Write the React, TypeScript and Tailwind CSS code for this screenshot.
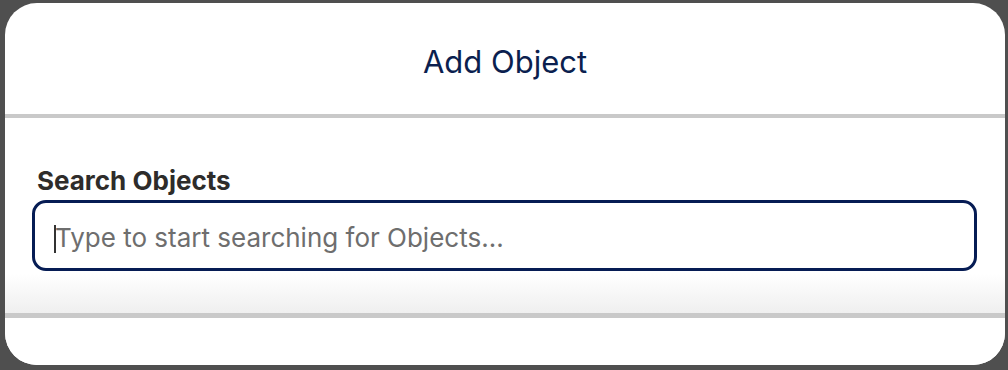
import React from 'react';

export default function App() {
  return (
    <div className="w-[1008px] h-[370px] bg-[#4f4f4f] pt-[3px] pl-[5px] pr-[3px] pb-[5px]">
      <div className="flex h-full flex-col overflow-hidden rounded-[32px] bg-white font-['Inter',sans-serif]">
        {/* header */}
        <div className="flex h-[111px] items-center justify-center pt-[8px]">
          <h2 className="text-[31px] font-normal text-[#0b1f4f]">Add Object</h2>
        </div>
        <div className="h-[4px] bg-[#c9c9c9]" />

        {/* body */}
        <div className="relative flex h-[195px] flex-col bg-gradient-to-b from-white from-[80%] to-[#efefef] px-[27px] pt-[49px]">
          <label className="mb-[5px] pl-[5px] text-[26px] font-bold leading-[28px] text-[#2e2c2a]">
            Search Objects
          </label>
          <div className="relative mr-[1px]">
            <input
              className="h-[71px] w-full rounded-[14px] border-[3px] border-[#061c54] bg-white pl-[20px] pt-[4px] text-[26px] text-[#333] outline-none placeholder:text-[#6e6e6e]"
              placeholder="Type to start searching for Objects..."
              readOnly
            />
            <span className="absolute left-[22px] top-[25px] h-[28px] w-[2px] bg-[#333]" />
          </div>
        </div>
        <div className="h-[5px] bg-[#c9c9c9]" />

        {/* footer */}
        <div className="flex-1 bg-white" />
      </div>
    </div>
  );
}
